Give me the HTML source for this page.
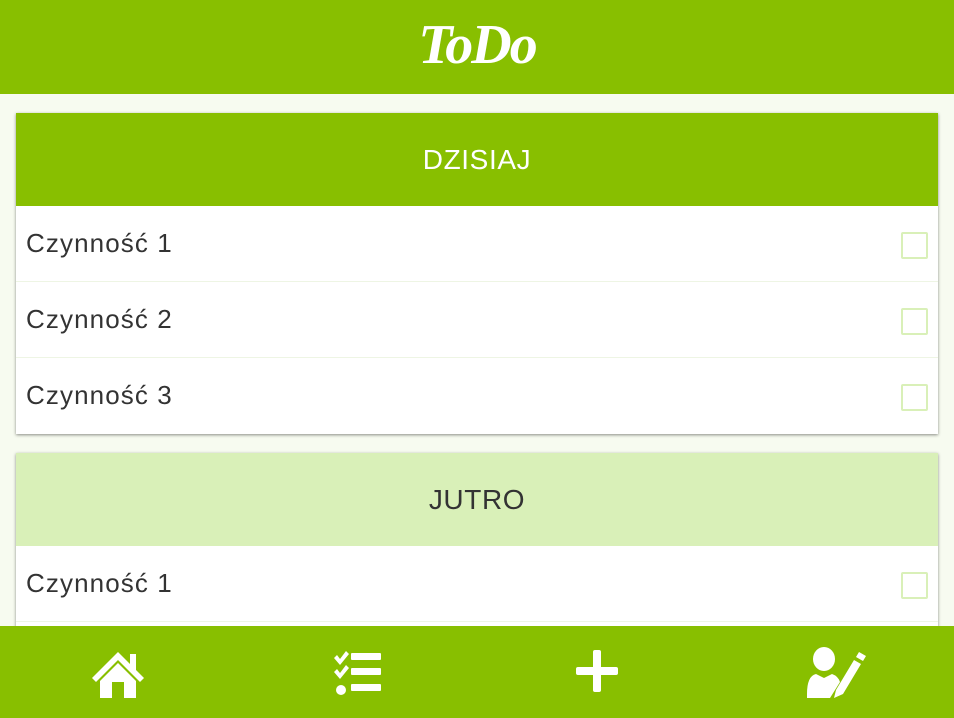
<!DOCTYPE html>
<html><head><meta charset="utf-8"><style>
*{margin:0;padding:0;box-sizing:border-box}
body{width:954px;height:718px;overflow:hidden;background:#f7fbf0;font-family:"Liberation Sans",sans-serif;position:relative}
.top{position:absolute;left:0;top:0;width:954px;height:94px;background:#88bf00;color:#fff;text-align:center;font-family:"Liberation Serif",serif;font-style:italic;font-weight:bold;font-size:56px;line-height:90px;letter-spacing:-2px}
.card{position:absolute;left:16px;width:922px;background:#fff;box-shadow:0 1px 3px rgba(0,0,0,.45)}
.h{height:93px;line-height:93px;text-align:center;font-size:28px;color:#fff;letter-spacing:0.6px}
.r{height:76px;line-height:74px;padding-left:10px;font-size:26px;color:#333;border-bottom:1px solid #eef5e4;position:relative;letter-spacing:1.1px}
.r:after{content:"";position:absolute;right:10px;top:26px;width:23px;height:23px;border:2px solid #d9f0b8;border-radius:2px}
.bot{position:absolute;left:0;top:626px;width:954px;height:92px;background:#88bf00}
.bot svg{position:absolute;fill:#fff}
</style></head><body>
<div class="top">ToDo</div>
<div class="card" style="top:113px">
<div class="h" style="background:#88bf00">DZISIAJ</div>
<div class="r">Czynność 1</div>
<div class="r">Czynność 2</div>
<div class="r" style="border:none">Czynność 3</div>
</div>
<div class="card" style="top:453px;height:200px">
<div class="h" style="background:#d9f0b8;color:#333">JUTRO</div>
<div class="r">Czynność 1</div>
</div>
<div class="bot">
<svg style="left:90px;top:24px" width="56" height="48" viewBox="0 0 56 48"><path d="M28 2 L2 28 L6 32 L28 10 L50 32 L54 28 L46 20 L46 4 L40 4 L40 14 Z"/><path d="M10 31 L28 13 L46 31 L46 48 L34 48 L34 32 L22 32 L22 48 L10 48 Z"/></svg>
<svg style="left:332px;top:24px" width="50" height="48" viewBox="0 0 50 48"><path d="M2 8 L5 5 L8 9 L14 1 L17 4 L8 15 Z M2 22 L5 19 L8 23 L14 15 L17 18 L8 29 Z"/><circle cx="9" cy="40" r="5"/><rect x="19" y="3" width="30" height="7" rx="1"/><rect x="19" y="18" width="30" height="7" rx="1"/><rect x="19" y="34" width="30" height="7" rx="1"/></svg>
<svg style="left:576px;top:24px" width="42" height="42" viewBox="0 0 42 42"><rect x="17" y="0" width="8" height="42" rx="2"/><rect x="0" y="17" width="42" height="8" rx="2"/></svg>
<svg style="left:806px;top:20px" width="62" height="54" viewBox="0 0 62 54"><ellipse cx="18" cy="13" rx="11" ry="12"/><path d="M1 48 Q1 30 10 28 L18 32 L26 28 Q32 30 34 36 L24 52 L1 52 Z"/><path d="M28 52 L30 44 L48 14 L55 18 L37 48 Z M50 11 L53 6 L60 10 L57 15 Z"/></svg>
</div>
</body></html>
